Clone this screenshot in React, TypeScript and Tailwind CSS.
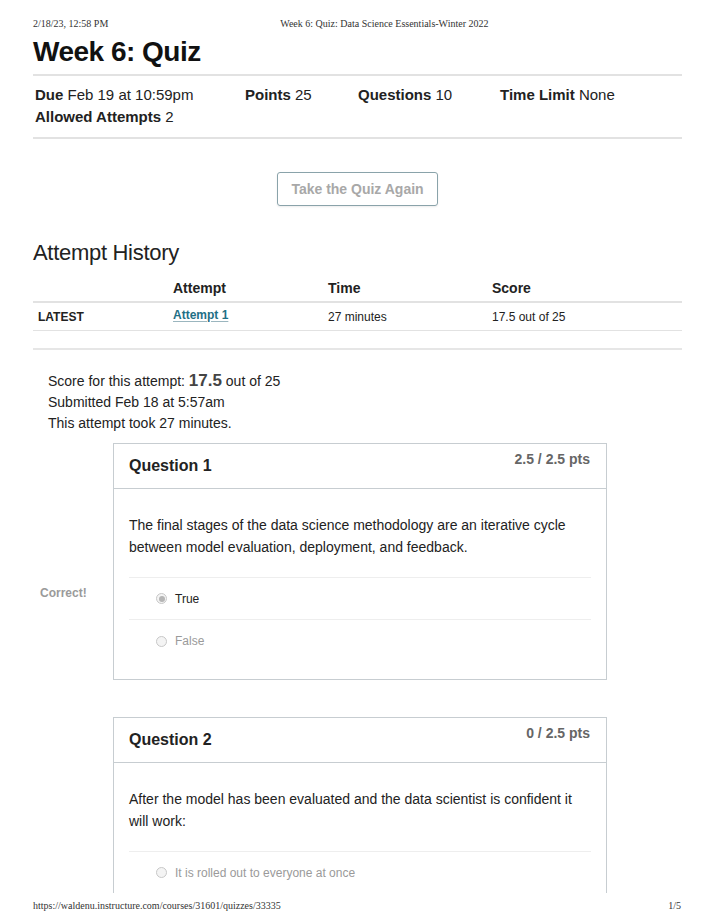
const serif = "font-['Liberation_Serif','Times_New_Roman',serif]"

function Radio({ checked }: { checked?: boolean }) {
  return (
    <span className="inline-flex w-[11px] h-[11px] rounded-full border border-[#c8c8c8] bg-[#f4f4f4] items-center justify-center">
      {checked && <span className="w-[6px] h-[6px] rounded-full bg-[#b5b5b5]" />}
    </span>
  )
}

function Answer({ text, checked, muted, last, label }: { text: string; checked?: boolean; muted?: boolean; last?: boolean; label?: string }) {
  return (
    <div className={`relative h-[42px] flex items-center pl-[27px] gap-[8px] ${last ? '' : 'border-b border-[#eeeeee]'}`}>
      {label && (
        <span className="absolute left-[-89px] top-[6px] text-[12px] font-bold text-[#9a9a9a]">{label}</span>
      )}
      <Radio checked={checked} />
      <span className={`text-[12px] ${muted ? 'text-[#9a9a9a]' : 'text-[#222]'}`}>{text}</span>
    </div>
  )
}

function Question({ num, pts, text, children }: { num: number; pts: string; text: string[]; children: React.ReactNode }) {
  return (
    <div className="ml-[80px] w-[494px] border border-[#c7cdd1] bg-white">
      <div className="h-[45px] border-b border-[#c7cdd1] flex justify-between pl-[15px] pr-[16px]">
        <span className="mt-[11px] text-[16px] font-bold text-[#222] leading-[22px]">Question {num}</span>
        <span className="mt-[5px] text-[14px] font-bold text-[#666] leading-[20px]">{pts}</span>
      </div>
      <div className="px-[15px]">
        <div className="pt-[25px] text-[14px] leading-[22px] text-[#222]">
          {text.map((t) => (
            <div key={t}>{t}</div>
          ))}
        </div>
        <div className="mt-[19px] border-t border-[#eeeeee]">{children}</div>
      </div>
    </div>
  )
}

export default function App() {
  return (
    <div className="w-[714px] h-[918px] bg-white flex flex-col font-['Liberation_Sans',Arial,sans-serif] text-[#222] overflow-hidden">
      <div className="flex-1 overflow-hidden px-[33px]">
        {/* print header */}
        <div className={`${serif} pt-[19px] flex text-[10px] leading-[10px] text-[#333]`}>
          <span>2/18/23, 12:58 PM</span>
          <span className="ml-[172px]">Week 6: Quiz: Data Science Essentials-Winter 2022</span>
        </div>

        <h1 className="mt-[7px] text-[28px] leading-[32px] font-bold tracking-[-0.5px] text-[#111]">Week 6: Quiz</h1>
        <div className="mt-[6px] w-[649px] border-t-2 border-[#e2e2e2]" />

        <div className="pt-[8px] pl-[2px] text-[15px] leading-[22px]">
          <div className="flex">
            <div className="w-[210px]"><b>Due</b> Feb 19 at 10:59pm</div>
            <div className="w-[113px]"><b>Points</b> 25</div>
            <div className="w-[142px]"><b>Questions</b> 10</div>
            <div><b>Time Limit</b> None</div>
          </div>
          <div><b>Allowed Attempts</b> 2</div>
        </div>
        <div className="mt-[9px] w-[649px] border-t-2 border-[#e2e2e2]" />

        <div className="mt-[33px] flex justify-center w-[649px]">
          <div className="w-[161px] h-[34px] border border-[#8aa3aa] rounded-[3px] flex items-center justify-center text-[14px] font-bold text-[#a8a8a8] shadow-[0_1px_2px_rgba(0,0,0,0.08)]">
            Take the Quiz Again
          </div>
        </div>

        <h2 className="mt-[33px] text-[22px] leading-[28px] text-[#222] tracking-[-0.3px]">Attempt History</h2>

        <div className="w-[649px]">
          <div className="mt-[8px] h-[26px] flex text-[14px] font-bold leading-[26px] border-b-2 border-[#e2e2e2] box-content">
            <span className="w-[140px]" />
            <span className="w-[155px]">Attempt</span>
            <span className="w-[164px]">Time</span>
            <span>Score</span>
          </div>
          <div className="h-[28px] flex items-center text-[12px] border-b border-[#e2e2e2]">
            <span className="w-[140px] pl-[5px] font-bold">LATEST</span>
            <span className="w-[155px] font-bold text-[#1f6f86] underline underline-offset-2 decoration-[#9bb6bf] -mt-[4px]">Attempt 1</span>
            <span className="w-[164px]">27 minutes</span>
            <span>17.5 out of 25</span>
          </div>
          <div className="mt-[17px] border-t-2 border-[#e6e6e6]" />
        </div>

        <div className="mt-[20px] pl-[15px] text-[14px] leading-[21px] text-[#222]">
          <div>
            Score for this attempt: <span className="text-[17px] font-bold text-[#444]">17.5</span> out of 25
          </div>
          <div>Submitted Feb 18 at 5:57am</div>
          <div>This attempt took 27 minutes.</div>
        </div>

        <div className="mt-[9px]">
          <Question
            num={1}
            pts="2.5 / 2.5 pts"
            text={[
              'The final stages of the data science methodology are an iterative cycle',
              'between model evaluation, deployment, and feedback.',
            ]}
          >
            <Answer text="True" checked label="Correct!" />
            <Answer text="False" muted last />
            <div className="h-[17px]" />
          </Question>
        </div>

        <div className="mt-[37px]">
          <Question
            num={2}
            pts="0 / 2.5 pts"
            text={['After the model has been evaluated and the data scientist is confident it', 'will work:']}
          >
            <Answer text="It is rolled out to everyone at once" muted />
            <Answer text="" muted />
          </Question>
        </div>
      </div>

      {/* print footer */}
      <div className={`${serif} h-[25px] shrink-0 px-[33px] flex justify-between text-[10px] leading-[10px] text-[#333] pt-[8px]`}>
        <span>https://waldenu.instructure.com/courses/31601/quizzes/33335</span>
        <span>1/5</span>
      </div>
    </div>
  )
}
